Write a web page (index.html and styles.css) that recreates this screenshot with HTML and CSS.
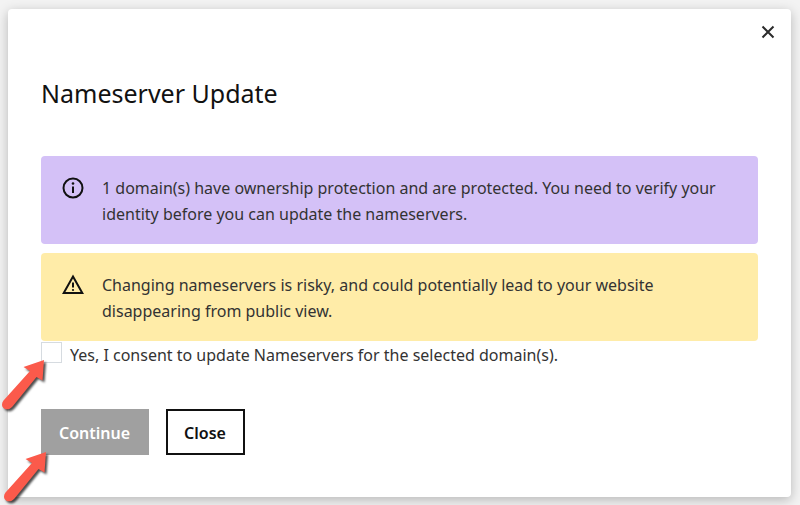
FILE: index.html
```html
<!DOCTYPE html>
<html lang="en">
<head>
  <meta charset="UTF-8">
  <meta name="viewport" content="width=device-width, initial-scale=1.0">
  <title>Nameserver Update</title>
  <link rel="stylesheet" href="styles.css">
</head>
<body>
  <svg class="defs" aria-hidden="true">
    <symbol id="arrow" viewBox="0 0 50 58">
      <path d="M45 2 L43.500 22.500 L37.500 19 L13.500 48.500 C10.500 52 6.500 52 4.500 50 C2.500 48 2.500 45 4.500 42.500 L31 13 L24.500 9 Z"/>
    </symbol>
  </svg>

  <div class="modal" role="dialog" aria-labelledby="title">
    <div class="modal-top">
      <button type="button" class="close-icon" aria-label="Close dialog">
        <svg viewBox="0 0 14 14" width="14" height="14"><path d="M1.500 1.500 L12.500 12.500 M12.500 1.500 L1.500 12.500"/></svg>
      </button>
    </div>

    <form class="modal-body">
      <h1 id="title">Nameserver Update</h1>

      <div class="alert info">
        <svg class="alert-icon" viewBox="0 0 22 22">
          <circle cx="11" cy="11" r="9.500"/>
          <path d="M11 9.500 V16"/>
          <circle class="dot" cx="11" cy="6.500" r="1.300"/>
        </svg>
        <p>1 domain(s) have ownership protection and are protected. You need to verify your identity before you can update the nameservers.</p>
      </div>

      <div class="alert warning">
        <svg class="alert-icon" viewBox="0 0 22 22">
          <path d="M11 2.500 L20.300 19 H1.700 Z"/>
          <path d="M11 8.500 V13.500"/>
          <circle class="dot" cx="11" cy="16" r="1.100"/>
        </svg>
        <p>Changing nameservers is risky, and could potentially lead to your website disappearing from public view.</p>
      </div>

      <div class="consent">
        <input type="checkbox" id="consent" name="consent">
        <label for="consent">Yes, I consent to update Nameservers for the selected domain(s).</label>
        <svg class="arrow" aria-hidden="true"><use href="#arrow"/></svg>
      </div>

      <div class="actions">
        <div class="action">
          <button type="submit" class="btn primary" disabled>Continue</button>
          <svg class="arrow" aria-hidden="true"><use href="#arrow"/></svg>
        </div>
        <button type="button" class="btn">Close</button>
      </div>
    </form>
  </div>
</body>
</html>
```
FILE: styles.css
```css
* {
  box-sizing: border-box;
}

body {
  margin: 0;
  padding: 9px 9px 8px 8px;
  background-color: #f3f3f3;
  color: #333;
  font-family: "Noto Sans", sans-serif;
  font-size: 16px;
  line-height: 26px;
}

.defs {
  position: absolute;
  width: 0;
  height: 0;
}

.modal {
  background-color: #fff;
  border-radius: 4px;
  box-shadow: 0 3px 12px rgba(0, 0, 0, 0.25);
}

.modal-top {
  display: flex;
  justify-content: flex-end;
  padding: 12px 12px 0;
}

.close-icon {
  display: flex;
  padding: 4px;
  border: 0;
  background: none;
  cursor: pointer;
}

.close-icon path {
  stroke: #2b2b2b;
  stroke-width: 2;
}

.modal-body {
  padding: 33px 33px 42px;
}

h1 {
  margin: 0 0 46px;
  color: #111;
  font-size: 25px;
  font-weight: 400;
  line-height: 34px;
}

.alert {
  display: flex;
  align-items: flex-start;
  gap: 18px;
  padding: 19px 21px 17px;
  border-radius: 4px;
}

.alert p {
  margin: 0;
}

.info {
  margin-bottom: 9px;
  background-color: #d4c1f7;
}

.warning {
  background-color: #ffeca8;
}

.alert-icon {
  flex: none;
  width: 22px;
  height: 22px;
  margin-top: 2px;
  fill: none;
  stroke: #111;
  stroke-width: 2;
}

.alert-icon .dot {
  fill: #111;
  stroke: none;
}

.consent {
  position: relative;
  display: flex;
  align-items: flex-start;
  gap: 8px;
  padding-top: 1px;
}

.consent input {
  appearance: none;
  flex: none;
  width: 21px;
  height: 21px;
  margin: 0;
  border: 1px solid #d6dbe0;
  background-color: #fff;
}

.actions {
  display: flex;
  gap: 17px;
  margin-top: 41px;
}

.action {
  position: relative;
}

.btn {
  height: 46px;
  padding: 2px 17px 0 16px;
  border: 2px solid #111;
  background-color: #fff;
  color: #111;
  font-family: inherit;
  font-size: 16px;
  font-weight: 600;
  cursor: pointer;
}

.primary {
  border-color: #a0a0a0;
  background-color: #a0a0a0;
  color: #fff;
  cursor: default;
}

/* pointers over the checkbox and the continue button */
.arrow {
  position: absolute;
  top: 17px;
  left: -42px;
  width: 50px;
  height: 58px;
  fill: #fb5a4b;
  filter: drop-shadow(2px 2px 1px rgba(0, 0, 0, 0.7));
  pointer-events: none;
}

.action .arrow {
  top: 41px;
  left: -40px;
}
```
